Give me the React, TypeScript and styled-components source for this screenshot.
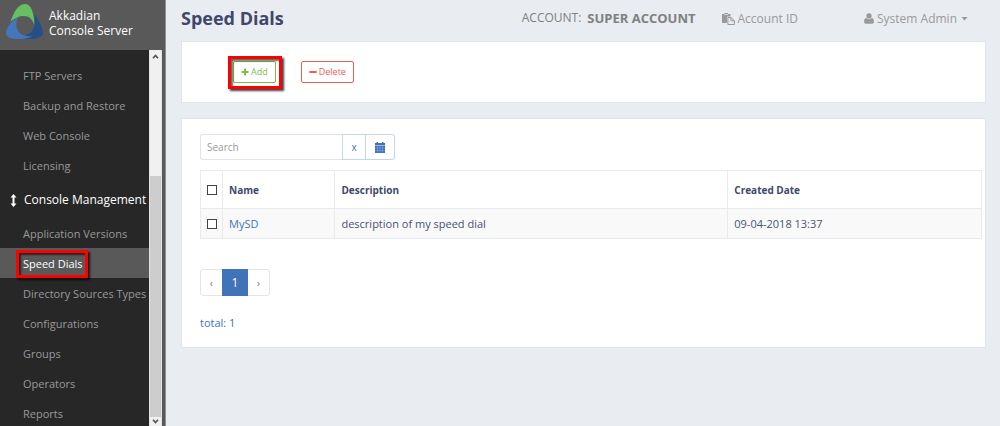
import React from "react";
import styled, { createGlobalStyle } from "styled-components";

const GlobalStyle = createGlobalStyle`
  *, *::before, *::after { box-sizing: border-box; }
  body {
    margin: 0;
    background: #e9ecf1;
    color: #4a5270;
    font: 12px/16px "Open Sans", "Liberation Sans", sans-serif;
  }
  button, input { font: inherit; }
  a { text-decoration: none; }
`;

const Page = styled.div`
  display: flex;
  min-height: 100vh;
`;

const Sidebar = styled.aside`
  display: flex;
  flex-direction: column;
  flex: 0 0 166px;
  height: 100vh;
  padding-right: 3px;
  overflow: hidden;
  background: #595959;
  border-right: 1px solid #8f9092;
`;

const Brand = styled.a`
  display: flex;
  flex: 0 0 50px;
  gap: 5px;
  padding: 3px 0 0 5px;
  color: #fff;
  line-height: 15px;

  span { padding-top: 5px; }
`;

const SidebarBody = styled.div`
  display: flex;
  flex: 1;
  min-height: 0;
`;

const Nav = styled.nav`
  flex: 1;
  padding-top: 10px;
  overflow: hidden;
  background: #272727;
`;

const NavList = styled.ul`
  margin: 0;
  padding: 0;
  list-style: none;
`;

const NavLink = styled.a<{ $active?: boolean }>`
  display: flex;
  align-items: center;
  height: 30px;
  padding: 2px 0 0 23px;
  font-size: 11px;
  white-space: nowrap;
  color: ${(p) => (p.$active ? "#fff" : "#999")};
  background: ${(p) => (p.$active ? "#595959" : "transparent")};
`;

const NavHeading = styled.a`
  display: flex;
  align-items: center;
  gap: 7px;
  height: 38px;
  padding: 2px 0 0 10px;
  color: #fff;
  white-space: nowrap;

  svg { flex: none; }
`;

const Callout = styled.span<{ $inset: string }>`
  position: relative;

  &::after {
    content: "";
    position: absolute;
    inset: ${(p) => p.$inset};
    border: 3px solid #f00;
    box-shadow: 2px 2px 2px rgba(0, 0, 0, 0.75), inset 2px 2px 2px rgba(0, 0, 0, 0.6);
    pointer-events: none;
  }
`;

const ScrollBar = styled.div`
  display: flex;
  flex-direction: column;
  flex: 0 0 13px;
  border: solid #e2e2e2;
  border-width: 0 1px;
  background: #f0f0f0;
`;

const ScrollArrow = styled.div<{ $height: number }>`
  display: flex;
  justify-content: center;
  align-items: center;
  height: ${(p) => p.$height}px;
  color: #505050;
`;

const ScrollTrack = styled.div`
  display: flex;
  flex-direction: column;
  justify-content: flex-end;
  flex: 1;
`;

const ScrollThumb = styled.div`
  height: 68%;
  background: #cdcdcd;
`;

const Main = styled.main`
  flex: 1;
  min-width: 0;
  padding: 0 14px 16px 15px;
`;

const Header = styled.header`
  display: flex;
  align-items: center;
  height: 41px;
  padding: 0 18px 6px 0;
  color: #999;
`;

const Title = styled.h1`
  flex: 1;
  margin: 0;
  color: #3f486b;
  font-size: 18px;
  line-height: 24px;
  font-weight: 700;
`;

const Account = styled.div`
  display: flex;
  align-items: center;
  gap: 6px;
  margin-right: 26px;
  color: #808080;

  strong { font-size: 13px; font-weight: 700; }
`;

const HeaderLink = styled.a`
  display: flex;
  align-items: center;
  gap: 3px;
  margin-right: 66px;
  padding-top: 2px;
  color: #999;
`;

const UserMenu = styled.button`
  display: flex;
  align-items: center;
  gap: 3px;
  padding: 2px 0 0;
  border: 0;
  background: none;
  color: #999;
`;

const Card = styled.section`
  margin-bottom: 15px;
  border: 1px solid #e0e4eb;
  background: #fff;
`;

const Actions = styled(Card)`
  display: flex;
  align-items: center;
  gap: 25px;
  height: 62px;
  padding-left: 51px;
`;

const ActionButton = styled.button<{ $color: string }>`
  display: flex;
  align-items: center;
  gap: 2px;
  height: 22px;
  padding: 0 7px;
  border: 1px solid ${(p) => p.$color};
  border-radius: 2px;
  background: #fff;
  color: ${(p) => p.$color};
  font-size: 9px;
`;

const Content = styled(Card)`
  margin-bottom: 0;
  padding: 15px 3px 16px 18px;
`;

const SearchGroup = styled.div`
  display: flex;
  height: 26px;
  margin-bottom: 10px;
`;

const SearchInput = styled.input`
  width: 142px;
  padding: 0 6px;
  border: 1px solid #e0e3e8;
  border-right: 0;
  border-radius: 3px 0 0 3px;
  outline: 0;
  color: #4a5270;
  font-size: 10px;

  &::placeholder { color: #999; opacity: 1; }
`;

const SearchButton = styled.button<{ $width: number }>`
  display: flex;
  justify-content: center;
  align-items: center;
  width: ${(p) => p.$width}px;
  padding: 0;
  border: 1px solid #c5d5eb;
  background: #fff;
  color: #4173b9;
  font-size: 10px;

  & + & { border-left: 0; }
  &:last-child { border-radius: 0 3px 3px 0; }
`;

const Table = styled.table`
  width: 100%;
  border-collapse: collapse;
  table-layout: fixed;
  font-size: 11px;

  th, td {
    padding: 0 6px;
    border: 1px solid #e7eaef;
    text-align: left;
  }
  th { height: 38px; font-size: 10px; font-weight: 700; color: #414968; }
  td { height: 30px; background: #f9f9f9; }
  a { color: #4173b9; }
`;

const Column = styled.col<{ $width?: string }>`
  width: ${(p) => p.$width ?? "auto"};
`;

const CheckBox = styled.input`
  display: block;
  width: 10px;
  height: 10px;
  margin: 0;
  border: 1px solid #444;
  background: #fff;
  appearance: none;

  &:checked { background: #4173b9; }
`;

const Pagination = styled.nav`
  display: inline-flex;
  height: 27px;
  margin-top: 30px;
  border: 1px solid #e2e4e8;
  border-radius: 3px;
`;

const PageLink = styled.a<{ $active?: boolean }>`
  display: flex;
  justify-content: center;
  align-items: center;
  width: ${(p) => (p.$active ? 26 : 21)}px;
  margin: -1px 0;
  color: ${(p) => (p.$active ? "#fff" : "#777")};
  background: ${(p) => (p.$active ? "#4173b9" : "transparent")};
  font-size: ${(p) => (p.$active ? 12 : 11)}px;
`;

const Total = styled.p`
  margin: 19px 0 0;
  color: #4173b9;
  font-size: 11px;
`;

const Logo = () => (
  <svg width="39" height="37" viewBox="0 0 39 37" aria-hidden="true">
    <path d="M5.500 18.500C9 9 13 1 20 1c6 0 9 8 9.500 22-1.500-6-5-10-10.500-10-5 0-9 2-13.500 5.500z" fill="#66bf62" />
    <path d="M29.500 11c4 6 8.500 14 8.500 19 0 5-9 6-16 6-4 0-7-2-9-5 5 3 11 1 14-3 3-4 3.500-10 2.500-17z" fill="#254f87" />
    <path d="M13 14.500C7 17 1 25 1 30c0 5 7 6 14 6 5 0 9-1 13-3-7 1-13-1-15.500-6-2-4-1.500-8 .5-12.500z" fill="#4376bd" />
  </svg>
);

const ArrowsIcon = () => (
  <svg width="7" height="13" viewBox="0 0 7 13" fill="currentColor" aria-hidden="true">
    <path d="M3.500 0 6.500 3.500h-2v6h2L3.500 13 .5 9.500h2v-6h-2z" />
  </svg>
);

const Chevron = ({ down }: { down?: boolean }) => (
  <svg width="7" height="5" viewBox="0 0 7 5" fill="none" stroke="currentColor" strokeWidth="1.600" aria-hidden="true">
    <path d={down ? "M1 .8 3.500 3.500 6 .8" : "M1 4.200 3.500 1.500 6 4.200"} />
  </svg>
);

const PlusIcon = () => (
  <svg width="8" height="8" viewBox="0 0 8 8" fill="currentColor" aria-hidden="true">
    <path d="M3 .5h2V3h2.500v2H5v2.500H3V5H.5V3H3z" />
  </svg>
);

const MinusIcon = () => (
  <svg width="8" height="8" viewBox="0 0 8 8" fill="currentColor" aria-hidden="true">
    <rect x=".3" y="3" width="7.400" height="2" rx=".5" />
  </svg>
);

const PasteIcon = () => (
  <svg width="13" height="12" viewBox="0 0 13 12" aria-hidden="true">
    <path d="M0 1h2.500V0h3.500v1h2.500v2.500H5V10H0z" fill="currentColor" />
    <path d="M2.500 1.600h3.500" stroke="#e9ecf1" strokeWidth=".8" />
    <path d="M5.900 4.500h3.200L12.400 7.600v3.900H5.900zM8.900 4.500v3.300h3.500" fill="none" stroke="currentColor" />
  </svg>
);

const UserIcon = () => (
  <svg width="10" height="11" viewBox="0 0 10 11" fill="currentColor" aria-hidden="true">
    <circle cx="5" cy="2.900" r="2.700" />
    <path d="M2.200 5C.8 5.200.1 6.500.1 8.800.1 10 .8 10.700 1.800 10.700h6.400c1 0 1.700-.7 1.700-1.900 0-2.300-.7-3.600-2.100-3.800C6.300 6.600 3.700 6.600 2.200 5z" />
  </svg>
);

const CaretIcon = () => (
  <svg width="8" height="4" viewBox="0 0 8 4" fill="currentColor" aria-hidden="true">
    <path d="M1.500 0h6l-3 3.400z" />
  </svg>
);

const CalendarIcon = () => (
  <svg width="10" height="11" viewBox="0 0 10 11" aria-hidden="true">
    <path d="M0 1h1.500V0h1.500v1h4V0h1.500v1H10v2H0zM0 3.500h10V11H0z" fill="currentColor" />
    <path d="M.5 6h9M.5 8.500h9M2.500 4.500v6M5 4.500v6M7.500 4.500v6" stroke="#fff" strokeOpacity=".35" strokeWidth=".5" />
  </svg>
);

const serverItems = ["FTP Servers", "Backup and Restore", "Web Console", "Licensing"];
const consoleItems = [
  "Application Versions",
  "Speed Dials",
  "Directory Sources Types",
  "Configurations",
  "Groups",
  "Operators",
  "Reports",
];

const NavItems = ({ items, active }: { items: string[]; active?: string }) => (
  <NavList>
    {items.map((item) => (
      <li key={item}>
        <NavLink href="#" $active={item === active}>
          {item === active ? <Callout $inset="-6px -5px -6px -7px">{item}</Callout> : item}
        </NavLink>
      </li>
    ))}
  </NavList>
);

export default function App() {
  return (
    <Page>
      <GlobalStyle />
      <Sidebar>
        <Brand href="#">
          <Logo />
          <span>
            Akkadian
            <br />
            Console Server
          </span>
        </Brand>
        <SidebarBody>
          <Nav>
            <NavItems items={serverItems} />
            <NavHeading href="#">
              <ArrowsIcon />
              Console Management
            </NavHeading>
            <NavItems items={consoleItems} active="Speed Dials" />
          </Nav>
          <ScrollBar aria-hidden="true">
            <ScrollArrow $height={13}>
              <Chevron />
            </ScrollArrow>
            <ScrollTrack>
              <ScrollThumb />
            </ScrollTrack>
            <ScrollArrow $height={9}>
              <Chevron down />
            </ScrollArrow>
          </ScrollBar>
        </SidebarBody>
      </Sidebar>
      <Main>
        <Header>
          <Title>Speed Dials</Title>
          <Account>
            ACCOUNT: <strong>SUPER ACCOUNT</strong>
          </Account>
          <HeaderLink href="#">
            <PasteIcon />
            Account ID
          </HeaderLink>
          <UserMenu type="button">
            <UserIcon />
            System Admin
            <CaretIcon />
          </UserMenu>
        </Header>
        <Actions>
          <Callout $inset="-5px -6px -6px -5px">
            <ActionButton type="button" $color="#7cbf42">
              <PlusIcon />
              Add
            </ActionButton>
          </Callout>
          <ActionButton type="button" $color="#ee5b4f">
            <MinusIcon />
            Delete
          </ActionButton>
        </Actions>
        <Content>
          <SearchGroup>
            <SearchInput type="text" placeholder="Search" aria-label="Search" />
            <SearchButton type="button" $width={24} aria-label="Clear search">
              x
            </SearchButton>
            <SearchButton type="button" $width={29} aria-label="Pick a date">
              <CalendarIcon />
            </SearchButton>
          </SearchGroup>
          <Table>
            <colgroup>
              <Column $width="22px" />
              <Column $width="14.4%" />
              <Column $width="50.3%" />
              <Column />
            </colgroup>
            <thead>
              <tr>
                <th>
                  <CheckBox type="checkbox" aria-label="Select all" />
                </th>
                <th>Name</th>
                <th>Description</th>
                <th>Created Date</th>
              </tr>
            </thead>
            <tbody>
              <tr>
                <td>
                  <CheckBox type="checkbox" aria-label="Select MySD" />
                </td>
                <td>
                  <a href="#">MySD</a>
                </td>
                <td>description of my speed dial</td>
                <td>09-04-2018 13:37</td>
              </tr>
            </tbody>
          </Table>
          <Pagination aria-label="Pages">
            <PageLink href="#" aria-label="Previous page">‹</PageLink>
            <PageLink href="#" $active aria-current="page">1</PageLink>
            <PageLink href="#" aria-label="Next page">›</PageLink>
          </Pagination>
          <Total>total: 1</Total>
        </Content>
      </Main>
    </Page>
  );
}
